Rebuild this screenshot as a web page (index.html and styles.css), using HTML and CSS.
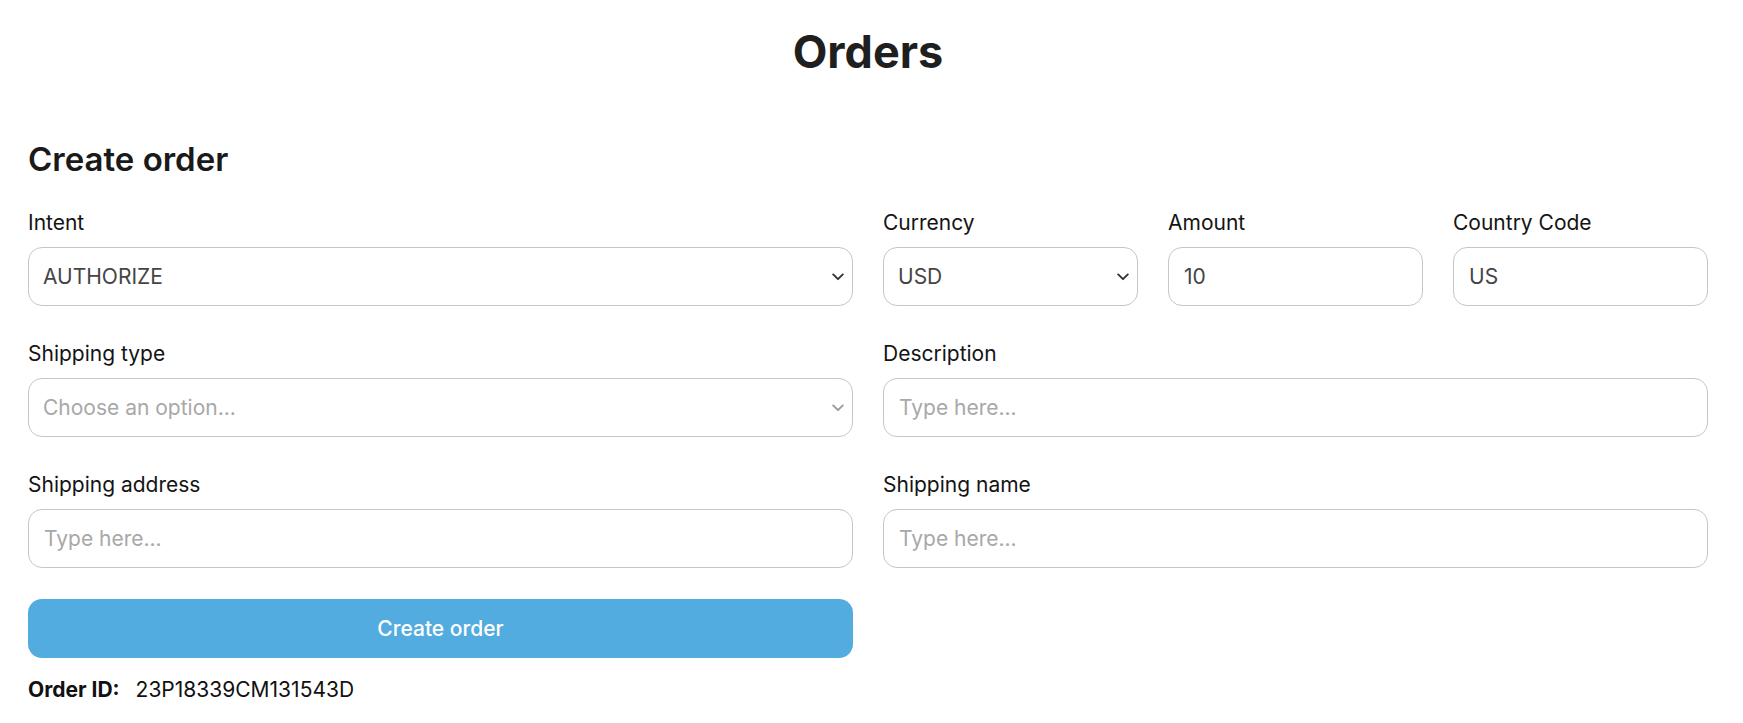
FILE: index.html
```html
<!DOCTYPE html>
<html lang="en">
<head>
<meta charset="utf-8">
<title>Orders</title>
<link rel="stylesheet" href="styles.css">
</head>
<body>
<main class="page">
  <h1 class="title">Orders</h1>
  <h2 class="section">Create order</h2>
  <form class="form">
    <div class="field">
      <label class="label" for="intent">Intent</label>
      <div class="select-wrap">
        <select id="intent" class="control select">
          <option>AUTHORIZE</option>
          <option>CAPTURE</option>
        </select>
        <svg class="chevron" viewBox="0 0 12 8" width="12" height="8" aria-hidden="true"><path d="M1.2 1.4 6 6.2 10.8 1.4" fill="none" stroke="currentColor" stroke-width="1.9" stroke-linecap="round" stroke-linejoin="round"/></svg>
      </div>
    </div>
    <div class="trio">
      <div class="field">
        <label class="label" for="currency">Currency</label>
        <div class="select-wrap">
          <select id="currency" class="control select">
            <option>USD</option>
            <option>EUR</option>
          </select>
          <svg class="chevron" viewBox="0 0 12 8" width="12" height="8" aria-hidden="true"><path d="M1.2 1.4 6 6.2 10.8 1.4" fill="none" stroke="currentColor" stroke-width="1.9" stroke-linecap="round" stroke-linejoin="round"/></svg>
        </div>
      </div>
      <div class="field">
        <label class="label" for="amount">Amount</label>
        <input id="amount" class="control" type="text" value="10">
      </div>
      <div class="field">
        <label class="label" for="country">Country Code</label>
        <input id="country" class="control" type="text" value="US">
      </div>
    </div>
    <div class="field">
      <label class="label" for="shipping-type">Shipping type</label>
      <div class="select-wrap is-empty">
        <select id="shipping-type" class="control select">
          <option>Choose an option...</option>
          <option>SHIPPING</option>
          <option>PICKUP</option>
        </select>
        <svg class="chevron" viewBox="0 0 12 8" width="12" height="8" aria-hidden="true"><path d="M1.2 1.4 6 6.2 10.8 1.4" fill="none" stroke="currentColor" stroke-width="1.9" stroke-linecap="round" stroke-linejoin="round"/></svg>
      </div>
    </div>
    <div class="field">
      <label class="label" for="description">Description</label>
      <input id="description" class="control" type="text" placeholder="Type here...">
    </div>
    <div class="field">
      <label class="label" for="address">Shipping address</label>
      <input id="address" class="control" type="text" placeholder="Type here...">
    </div>
    <div class="field">
      <label class="label" for="name">Shipping name</label>
      <input id="name" class="control" type="text" placeholder="Type here...">
    </div>
  </form>
  <div class="actions">
    <button class="button" type="button">Create order</button>
  </div>
  <p class="result"><span class="result-key">Order ID:</span><span class="result-value">23P18339CM131543D</span></p>
</main>
</body>
</html>
```

FILE: styles.css
```css
* {
  box-sizing: border-box;
}

html, body {
  margin: 0;
  background: #ffffff;
}

body {
  font-family: Inter, "Noto Sans", "Liberation Sans", sans-serif;
  color: #1c1c1c;
}

.page {
  padding: 25px 35px 0 28px;
}

.title {
  margin: 0;
  text-align: center;
  font-size: 45px;
  line-height: 54px;
  font-weight: 700;
  color: #1f1f1f;
}

.section {
  margin: 60px 0 31px;
  font-size: 33px;
  line-height: 40px;
  font-weight: 600;
  color: #1a1a1a;
}

.form {
  display: grid;
  grid-template-columns: 1fr 1fr;
  column-gap: 30px;
  row-gap: 35px;
}

.trio {
  display: grid;
  grid-template-columns: 1fr 1fr 1fr;
  column-gap: 30px;
}

.field {
  display: flex;
  flex-direction: column;
  min-width: 0;
}

.label {
  display: block;
  margin-bottom: 12px;
  font-size: 21px;
  line-height: 25px;
  color: #141414;
}

.control {
  display: block;
  width: 100%;
  height: 59px;
  margin: 0;
  padding: 0 15px;
  border: 1px solid #c6c6c6;
  border-radius: 14px;
  background: #ffffff;
  font-family: inherit;
  font-size: 21px;
  color: #454545;
  outline: none;
}

.control::placeholder {
  color: #a8a8a8;
  opacity: 1;
}

.select-wrap {
  position: relative;
  color: #333333;
}

.select {
  appearance: none;
  -webkit-appearance: none;
  padding: 0 40px 0 14px;
}

.select-wrap.is-empty {
  color: #9a9a9a;
}

.select-wrap.is-empty .select {
  color: #a8a8a8;
}

.chevron {
  position: absolute;
  right: 9px;
  top: 50%;
  margin-top: -4px;
  pointer-events: none;
}

.actions {
  display: grid;
  grid-template-columns: 1fr 1fr;
  column-gap: 30px;
  margin-top: 31px;
}

.button {
  height: 59px;
  border: 0;
  border-radius: 14px;
  background: #53ace0;
  color: #ffffff;
  font-family: inherit;
  font-size: 21px;
  font-weight: 500;
  cursor: pointer;
}

.result {
  margin: 19px 0 0;
  font-size: 21px;
  line-height: 25px;
  color: #111111;
}

.result-key {
  font-weight: 700;
}

.result-value {
  margin-left: 16px;
}
```
